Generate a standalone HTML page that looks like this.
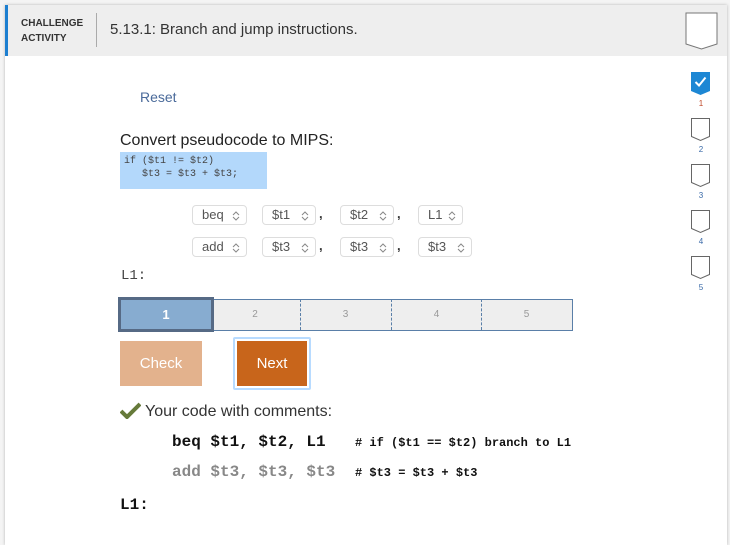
<!DOCTYPE html><html><head><style>
body{margin:0;width:730px;height:543px;background:#f4f4f4;position:relative;overflow:hidden;font-family:"Liberation Sans",sans-serif}
.a{position:absolute}
.card{left:5px;top:5px;width:722px;height:540px;background:#fff;box-shadow:0 0 3px rgba(0,0,0,.25)}
.hdr{left:5px;top:5px;width:722px;height:51px;background:#eeeeee;border-left:3px solid #1d7fd0;box-sizing:border-box}
.sel{height:20px;border:1px solid #ddd;border-radius:4px;box-sizing:border-box;font-size:13px;color:#555;line-height:18px;padding-left:9px;background:#fff}
.sel svg{position:absolute;right:6px;top:5px}
.cm{font-size:13px;color:#333;font-weight:bold}
.mono{font-family:"Liberation Mono",monospace}
.seg{top:299px;height:31px;width:90px;text-align:center;line-height:31px;font-size:10px;color:#999;border-left:1px dashed #5a7fa8;box-sizing:border-box}
.lab{font-size:8px;width:20px;text-align:center;color:#3a6aa8}
</style></head><body>
<div class="a card"></div>
<div class="a hdr"></div>
<div class="a" style="left:21px;top:16px;font-size:10px;font-weight:bold;color:#333;line-height:15px">CHALLENGE<br>ACTIVITY</div>
<div class="a" style="left:96px;top:13px;width:1px;height:34px;background:#aaa"></div>
<div class="a" style="left:110px;top:21px;font-size:15px;color:#333">5.13.1: Branch and jump instructions.</div>
<svg class="a" style="left:685px;top:12px" width="33" height="38"><path d="M1 1H32V32L16.5 37L1 32Z" fill="#fff" stroke="#777" stroke-width="1"/></svg>
<svg class="a" style="left:691px;top:72px" width="19" height="24"><path d="M0 0H19V19L9.5 23L0 19Z" fill="#1d87d4"/><path d="M4.5 10L8 13.5L14.5 5.5" stroke="#fff" stroke-width="2" fill="none"/></svg>
<div class="a lab" style="left:691px;top:99px;color:#c04a2a">1</div>
<svg class="a" style="left:691px;top:118px" width="19" height="24"><path d="M.5 .5H18.5V18.5L9.5 22.5L.5 18.5Z" fill="#fff" stroke="#666"/></svg><div class="a lab" style="left:691px;top:145px">2</div>
<svg class="a" style="left:691px;top:164px" width="19" height="24"><path d="M.5 .5H18.5V18.5L9.5 22.5L.5 18.5Z" fill="#fff" stroke="#666"/></svg><div class="a lab" style="left:691px;top:191px">3</div>
<svg class="a" style="left:691px;top:210px" width="19" height="24"><path d="M.5 .5H18.5V18.5L9.5 22.5L.5 18.5Z" fill="#fff" stroke="#666"/></svg><div class="a lab" style="left:691px;top:237px">4</div>
<svg class="a" style="left:691px;top:256px" width="19" height="24"><path d="M.5 .5H18.5V18.5L9.5 22.5L.5 18.5Z" fill="#fff" stroke="#666"/></svg><div class="a lab" style="left:691px;top:283px">5</div>
<div class="a" style="left:140px;top:89px;font-size:14px;color:#4a6a9a">Reset</div>
<div class="a" style="left:120px;top:132px;font-size:16px;color:#222">Convert pseudocode to MIPS:</div>
<div class="a mono" style="left:120px;top:152px;width:147px;height:37px;background:#b3d8fb;font-size:10px;line-height:13px;color:#444;padding:3px 0 0 4px;box-sizing:border-box;white-space:pre">if ($t1 != $t2)
   $t3 = $t3 + $t3;</div>
<div class="a sel" style="left:192px;top:205px;width:55px">beq<svg width="8" height="10"><path d="M1 4L4 1L7 4M1 6L4 9L7 6" stroke="#888" fill="none"/></svg></div>
<div class="a sel" style="left:262px;top:205px;width:54px">$t1<svg width="8" height="10"><path d="M1 4L4 1L7 4M1 6L4 9L7 6" stroke="#888" fill="none"/></svg></div>
<div class="a cm" style="left:319px;top:206px">,</div>
<div class="a sel" style="left:340px;top:205px;width:54px">$t2<svg width="8" height="10"><path d="M1 4L4 1L7 4M1 6L4 9L7 6" stroke="#888" fill="none"/></svg></div>
<div class="a cm" style="left:397px;top:206px">,</div>
<div class="a sel" style="left:418px;top:205px;width:45px">L1<svg width="8" height="10"><path d="M1 4L4 1L7 4M1 6L4 9L7 6" stroke="#888" fill="none"/></svg></div>
<div class="a sel" style="left:192px;top:237px;width:55px">add<svg width="8" height="10"><path d="M1 4L4 1L7 4M1 6L4 9L7 6" stroke="#888" fill="none"/></svg></div>
<div class="a sel" style="left:262px;top:237px;width:54px">$t3<svg width="8" height="10"><path d="M1 4L4 1L7 4M1 6L4 9L7 6" stroke="#888" fill="none"/></svg></div>
<div class="a cm" style="left:319px;top:238px">,</div>
<div class="a sel" style="left:340px;top:237px;width:54px">$t3<svg width="8" height="10"><path d="M1 4L4 1L7 4M1 6L4 9L7 6" stroke="#888" fill="none"/></svg></div>
<div class="a cm" style="left:397px;top:238px">,</div>
<div class="a sel" style="left:418px;top:237px;width:54px">$t3<svg width="8" height="10"><path d="M1 4L4 1L7 4M1 6L4 9L7 6" stroke="#888" fill="none"/></svg></div>
<div class="a mono" style="left:121px;top:268px;font-size:14px;color:#444">L1:</div>
<div class="a" style="left:118px;top:299px;width:455px;height:32px;border:1px solid #5a7fa8;box-sizing:border-box;background:#eee"></div>
<div class="a seg" style="left:210px;border-left:none">2</div>
<div class="a seg" style="left:300px">3</div>
<div class="a seg" style="left:391px">4</div>
<div class="a seg" style="left:481px">5</div>
<div class="a" style="left:118px;top:297px;width:96px;height:35px;background:#87acd0;border:3px solid #566a85;box-sizing:border-box;color:#fff;font-weight:bold;font-size:13px;text-align:center;line-height:29px">1</div>
<div class="a" style="left:120px;top:341px;width:82px;height:45px;background:#e3b28d;color:#fff;font-size:15px;text-align:center;line-height:46px">Check</div>
<div class="a" style="left:233px;top:337px;width:78px;height:53px;border:2px solid #b8dbff;border-radius:2px;box-sizing:border-box"></div>
<div class="a" style="left:237px;top:341px;width:70px;height:45px;background:#c8651b;color:#fff;font-size:15px;text-align:center;line-height:46px">Next</div>
<svg class="a" style="left:120px;top:402px" width="21" height="17"><path d="M1 9L7 15L20 2" stroke="#667a3a" stroke-width="4" fill="none"/></svg>
<div class="a" style="left:145px;top:403px;font-size:16px;color:#333">Your code with comments:</div>
<div class="a mono" style="left:172px;top:433px;font-size:16px;font-weight:bold;color:#111">beq $t1, $t2, L1</div>
<div class="a mono" style="left:355px;top:436px;font-size:12px;font-weight:bold;color:#111">#&nbsp;if ($t1 == $t2) branch to L1</div>
<div class="a mono" style="left:172px;top:463px;font-size:16px;font-weight:bold;color:#888">add $t3, $t3, $t3</div>
<div class="a mono" style="left:355px;top:466px;font-size:12px;font-weight:bold;color:#111">#&nbsp;$t3 = $t3 + $t3</div>
<div class="a mono" style="left:120px;top:496px;font-size:16px;font-weight:bold;color:#111">L1:</div>
</body></html>
